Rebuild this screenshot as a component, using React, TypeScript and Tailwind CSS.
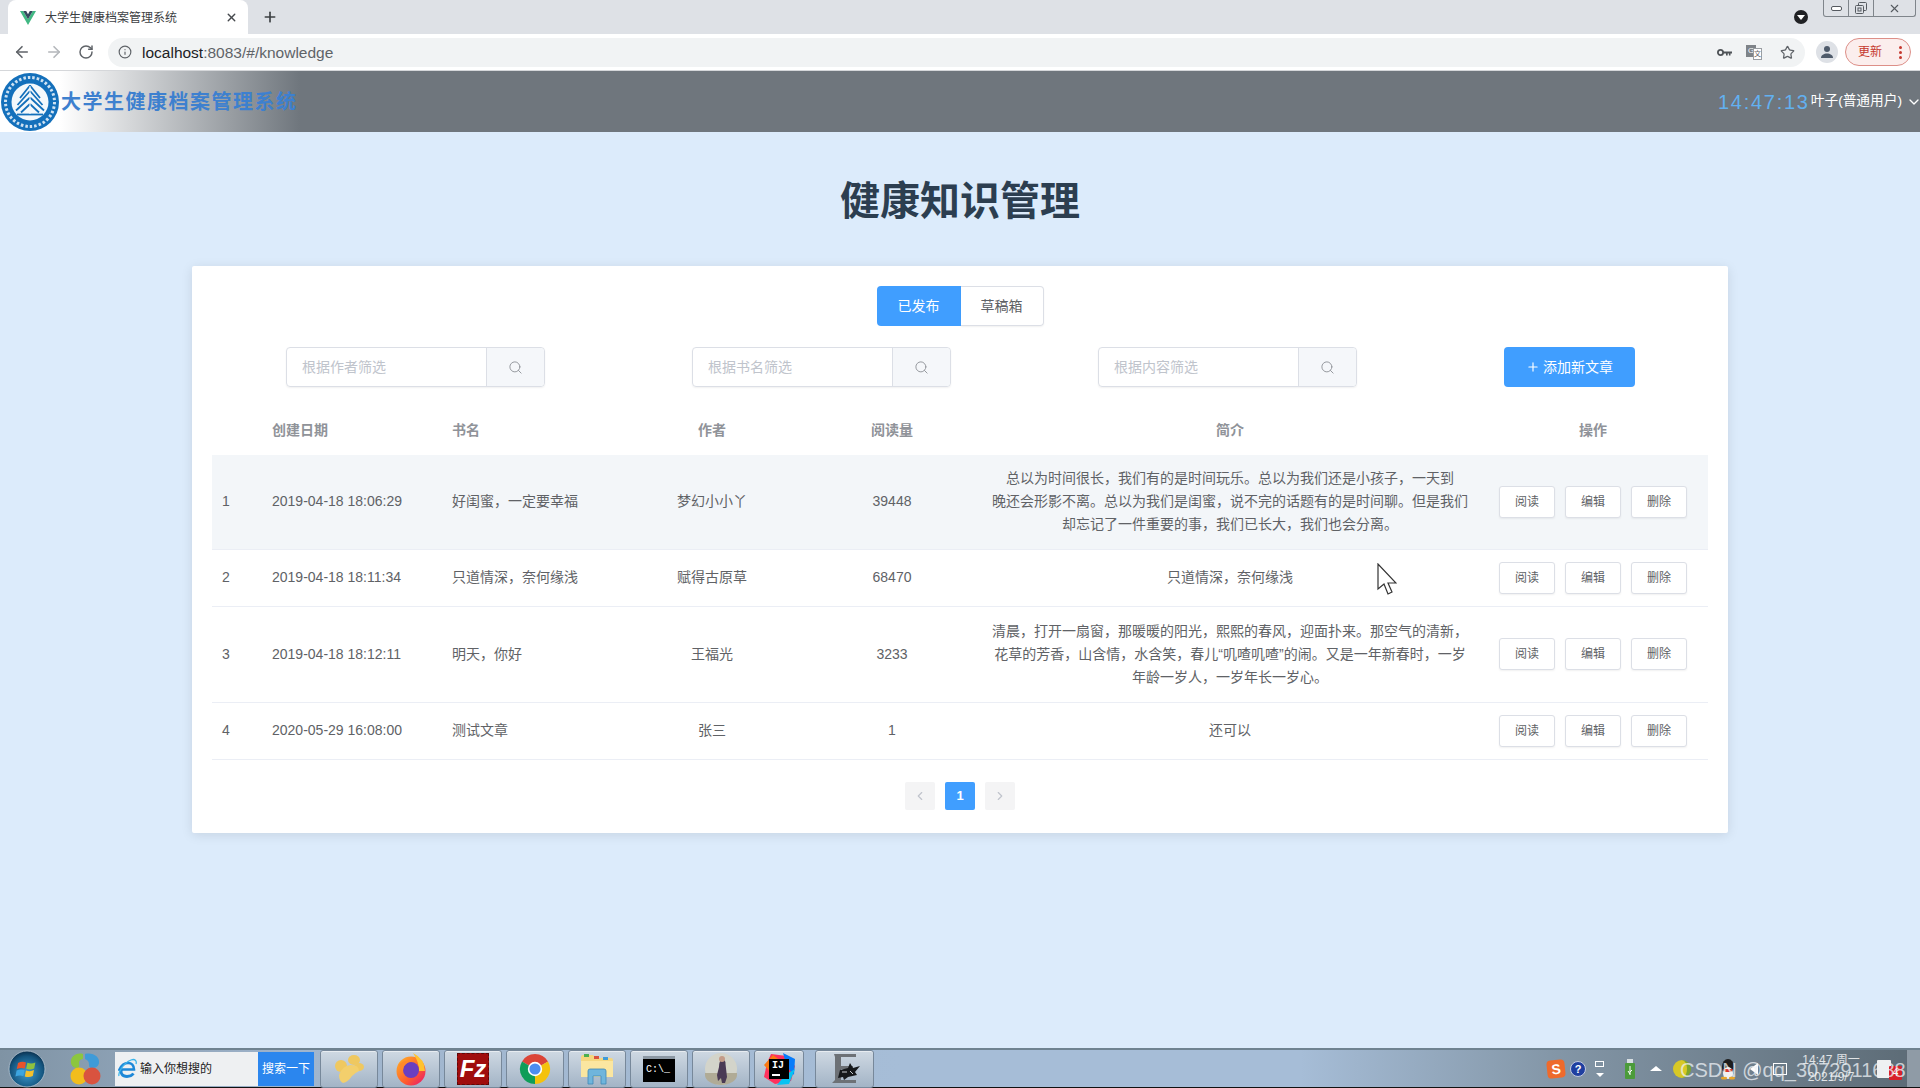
import { ChevronDown, ChevronLeft, ChevronRight, Plus, Search, X, ArrowLeft, ArrowRight, RotateCw, Info, Star } from "lucide-react";

const rows = [
  {
    id: 1,
    date: "2019-04-18 18:06:29",
    book: "好闺蜜，一定要幸福",
    author: "梦幻小小丫",
    reads: "39448",
    height: "h-[94px]",
    intro: [
      "总以为时间很长，我们有的是时间玩乐。总以为我们还是小孩子，一天到",
      "晚还会形影不离。总以为我们是闺蜜，说不完的话题有的是时间聊。但是我们",
      "却忘记了一件重要的事，我们已长大，我们也会分离。",
    ],
  },
  { id: 2, date: "2019-04-18 18:11:34", book: "只道情深，奈何缘浅", author: "赋得古原草", reads: "68470", height: "h-[57px]", intro: ["只道情深，奈何缘浅"] },
  {
    id: 3,
    date: "2019-04-18 18:12:11",
    book: "明天，你好",
    author: "王福光",
    reads: "3233",
    height: "h-[96px]",
    intro: [
      "清晨，打开一扇窗，那暖暖的阳光，熙熙的春风，迎面扑来。那空气的清新，",
      "花草的芳香，山含情，水含笑，春儿“叽喳叽喳”的闹。又是一年新春时，一岁",
      "年龄一岁人，一岁年长一岁心。",
    ],
  },
  { id: 4, date: "2020-05-29 16:08:00", book: "测试文章", author: "张三", reads: "1", height: "h-[57px]", intro: ["还可以"] },
];

function VueIcon() {
  return (
    <svg width="16" height="14" viewBox="0 0 16 14">
      <path d="M0 0h3.2L8 8.3 12.8 0H16L8 14z" fill="#41b883" />
      <path d="M3.2 0h3L8 3.2 9.800 0h3L8 8.3z" fill="#35495e" />
    </svg>
  );
}

function Emblem() {
  return (
    <svg width="58" height="58" viewBox="0 0 58 58">
      <circle cx="29" cy="29" r="29" fill="#1470bb" />
      <circle cx="29" cy="29" r="24.500" fill="none" stroke="#cfe2f2" strokeWidth="3" strokeDasharray="2.500 2" />
      <circle cx="29" cy="29" r="20.500" fill="#1470bb" />
      <circle cx="29" cy="29" r="18.500" fill="#f4f8fb" />
      <path d="M29 12.500 19 25M29 12.500 39 25M29 18 16.500 32M29 18 41.500 32M29 24.500 15 37.500M29 24.500 43 37.500M29 31 20 39.500M29 31 38 39.500" stroke="#1470bb" strokeWidth="1.800" fill="none" />
      <path d="M16 41.500h26" stroke="#1470bb" strokeWidth="1.800" />
      <path d="M29 13v28" stroke="#f4f8fb" strokeWidth="1" />
    </svg>
  );
}

function WinOrb() {
  return (
    <svg width="38" height="38" viewBox="0 0 38 38">
      <defs>
        <radialGradient id="orb" cx="50%" cy="60%" r="60%">
          <stop offset="0%" stopColor="#3f9bd0" />
          <stop offset="75%" stopColor="#14557f" />
          <stop offset="100%" stopColor="#0b2f4d" />
        </radialGradient>
      </defs>
      <circle cx="19" cy="19" r="18" fill="url(#orb)" stroke="#b7c7d3" strokeWidth="0.8" />
      <path d="M10 13q4-2 8-.5l-1.200 6q-4-1.400-8 .5z" fill="#e8532b" />
      <path d="M19.400 12.800q4 1.600 8-.3l-1.200 6q-4 1.800-8 .3z" fill="#8fc23f" />
      <path d="M8.600 20.600q4-2 8-.5l-1.200 6q-4-1.400-8 .5z" fill="#3da5e0" />
      <path d="M18 20.400q4 1.600 8-.3l-1.200 6q-4 1.800-8 .3z" fill="#f5c02c" />
    </svg>
  );
}

function Petals() {
  return (
    <svg width="32" height="34" viewBox="0 0 32 34">
      <path d="M14 2C7 0 1 5 2 11c.5 3 3 5 7 5 2-1 1-3 1-5 0-3 2-4 4-4z" fill="#8cc63f" />
      <path d="M16 2c8-2 15 3 14 9-.5 3-3 5-7 5-3 0-3-2-3-4 0-3-2-4-4-5z" fill="#3f9bd8" />
      <circle cx="10" cy="24" r="8.500" fill="#f2bd1d" />
      <circle cx="23" cy="24" r="8.500" fill="#d9533f" />
    </svg>
  );
}

function IeIcon() {
  return (
    <svg width="20" height="21" viewBox="0 0 20 21">
      <path d="M1.500 11.500h14.500c0-4-2.600-6.500-6-6.500-3.700 0-6.700 2.700-8.500 6.500z" fill="none" stroke="#1e88d8" strokeWidth="2.600" />
      <path d="M3.500 11c-1.400 4.500.8 7.500 5.500 7.500 2.700 0 5-1 6.500-3" fill="none" stroke="#1e88d8" strokeWidth="2.800" />
      <path d="M1 18C0 15 5 5 13 2c4-1.400 6 .5 5 4" fill="none" stroke="#3bb4ea" strokeWidth="1.300" />
    </svg>
  );
}

function FolderYellow() {
  return (
    <svg width="32" height="32" viewBox="0 0 32 32">
      <ellipse cx="21" cy="7" rx="6" ry="5" fill="#efc860" />
      <ellipse cx="8" cy="13" rx="6" ry="6" fill="#efc860" />
      <ellipse cx="26" cy="14" rx="5" ry="4" fill="#efc860" />
      <path d="M6 22q4-10 12-10t8 6q-4 2-7 5-4 6-9 7-4-2-4-8z" fill="#f3cf6c" />
    </svg>
  );
}

function Firefox() {
  return (
    <svg width="32" height="34" viewBox="0 0 32 34">
      <defs>
        <linearGradient id="ff" x1="0" y1="0" x2="1" y2="1">
          <stop offset="0%" stopColor="#ffb628" />
          <stop offset="60%" stopColor="#ff5a2d" />
          <stop offset="100%" stopColor="#e3127a" />
        </linearGradient>
      </defs>
      <circle cx="16" cy="19" r="14.500" fill="url(#ff)" />
      <path d="M18 1q12 6 12 18h-6q0-9-6-18z" fill="#ffc22e" />
      <circle cx="16" cy="18" r="8" fill="#6a3fc0" />
      <path d="M4 13q5-6 10-3-6 3-6 9-3-2-4-6z" fill="#ff8a2b" />
    </svg>
  );
}

function Chrome() {
  return (
    <svg width="32" height="32" viewBox="0 0 32 32">
      <path d="M16 16 3 8.500A15 15 0 0 1 29 8.500z" fill="#db4437" />
      <path d="M16 16 29 8.500A15 15 0 0 1 16 31z" fill="#f4c20d" />
      <path d="M16 16 16 31A15 15 0 0 1 3 8.500z" fill="#0f9d58" />
      <circle cx="16" cy="16" r="7.200" fill="#fff" />
      <circle cx="16" cy="16" r="5.600" fill="#4d8df1" />
    </svg>
  );
}

function Explorer() {
  return (
    <svg width="34" height="32" viewBox="0 0 34 32">
      <path d="M1 4q0-2 2-2h10l3 3h15q2 0 2 2v15H1z" fill="#f5d77f" />
      <rect x="4" y="1" width="5" height="3" fill="#4caf50" />
      <rect x="14" y="3" width="5" height="3" fill="#d9533f" />
      <rect x="23" y="4" width="5" height="3" fill="#3f9bd8" />
      <rect x="1" y="8" width="32" height="16" fill="#fbe6a0" />
      <path d="M8 18q0-2 2-2h14q2 0 2 2v13h-5v-8h-8v8H8z" fill="#6fb5dc" stroke="#3f88b6" strokeWidth="0.8" />
    </svg>
  );
}

function Avatar() {
  return (
    <svg width="32" height="32" viewBox="0 0 32 32">
      <circle cx="16" cy="16" r="16" fill="#d3d4ca" />
      <path d="M0 20h32v2a16 10 0 0 1-32 0z" fill="#b0ab96" />
      <path d="M17 6q4 1 3.500 5L22 24l-2 6h-3l-1-5-3 3-1-6 2-8q0-6 3-8z" fill="#4a3a55" />
      <circle cx="17" cy="6" r="3" fill="#c49c88" />
    </svg>
  );
}

function Idea() {
  return (
    <div className="relative w-[32px] h-[32px]">
      <svg width="32" height="32" viewBox="0 0 32 32" className="absolute inset-0">
        <path d="M8 1 24 3 32 13 28 28 12 31 1 24 4 10z" fill="#fe315d" />
        <path d="M20 0 32 6 31 22 24 14z" fill="#087cfa" />
        <path d="M1 12 10 2 18 8 8 20z" fill="#f97a12" />
        <path d="M22 22 32 16 26 31 14 32z" fill="#07c3f2" />
        <rect x="6" y="6" width="20" height="20" fill="#000" />
        <rect x="9" y="21" width="8" height="2" fill="#fff" />
      </svg>
      <span className="absolute left-[9px] top-[6px] text-[10px] leading-[13px] font-bold text-white font-['Liberation_Mono',monospace]">IJ</span>
    </div>
  );
}

function LastApp() {
  return (
    <svg width="34" height="34" viewBox="0 0 34 34">
      <path d="M6 2h22v3H13v9h12v3H13v11h15v3H4l3-3V5z" fill="#6d7176" />
      <path d="M12 18l8-2 2-5 3 5 7-2-5 6 2 3-9 2-4 3-1-3-5 1z" fill="#16191c" />
      <path d="M14 20h5M22 19l3 3" stroke="#c8ccd0" strokeWidth="1" />
    </svg>
  );
}

function TaskButton({ children, w = "w-[58px]" }: { children: React.ReactNode; w?: string }) {
  return (
    <div className={`${w} h-[38px] flex items-center justify-center rounded-[3px] border border-[#77889a] bg-gradient-to-b from-[#cfd9e3] to-[#a3b4c6] shadow-[inset_0_1px_0_rgba(255,255,255,0.5)]`}>
      {children}
    </div>
  );
}

function TabBar() {
  return (
    <div className="h-[34px] bg-[#dee1e6] flex pl-2 relative">
      <div className="w-[240px] h-[34px] bg-white rounded-t-[8px] flex items-center pl-[12px] pr-[10px] pt-[1px]">
        <VueIcon />
        <span className="ml-[9px] text-[12px] text-[#3c4043]">大学生健康档案管理系统</span>
        <X size={13} strokeWidth={2.5} className="ml-auto text-[#45484c]" />
      </div>
      <Plus size={16} strokeWidth={2.5} className="ml-[14px] mt-[9px] text-[#3c4043]" />
      <div className="ml-auto mt-[10px] mr-[15px] w-[14px] h-[14px] rounded-full bg-[#202124] flex items-center justify-center">
        <div className="w-0 h-0 border-l-[4px] border-r-[4px] border-t-[5px] border-l-transparent border-r-transparent border-t-white" />
      </div>
      <div className="w-[93px] h-[17px] mr-[4px] border border-t-0 border-[#7f858b] rounded-b-[3px] flex text-[#555a60]">
        <div className="w-[25px] border-r border-[#7f858b] flex items-center justify-center">
          <div className="w-[11px] h-[5px] border border-[#555a60] rounded-[2px] bg-white" />
        </div>
        <div className="w-[25px] border-r border-[#7f858b] flex items-center justify-center">
          <svg width="12" height="12" viewBox="0 0 12 12" fill="none" stroke="#555a60">
            <rect x="3.500" y="0.500" width="8" height="8" rx="1" />
            <rect x="0.500" y="3.500" width="8" height="8" rx="1" fill="#dee1e6" />
            <rect x="3" y="6" width="3" height="3" />
          </svg>
        </div>
        <div className="flex-1 flex items-center justify-center">
          <X size={13} strokeWidth={2} />
        </div>
      </div>
    </div>
  );
}

function AddressBar() {
  return (
    <div className="h-[37px] bg-white flex items-center border-b border-[#d5d7da]">
      <ArrowLeft size={18} strokeWidth={2.2} className="ml-[13px] text-[#5f6368]" />
      <ArrowRight size={18} strokeWidth={2.2} className="ml-[14px] text-[#b4b7bb]" />
      <RotateCw size={16} strokeWidth={2.2} className="ml-[15px] text-[#5f6368]" />
      <div className="ml-[14px] w-[1697px] h-[29px] bg-[#f1f3f4] rounded-full flex items-center pl-[10px] pr-[10px]">
        <Info size={14} strokeWidth={2} className="text-[#5f6368]" />
        <span className="ml-[10px] mt-[1px] text-[15.5px] text-[#5f6368]">
          <span className="text-[#202124]">localhost</span>:8083/#/knowledge
        </span>
        <svg width="15" height="9" viewBox="0 0 15 9" className="ml-auto">
          <circle cx="3.500" cy="4.500" r="2.600" fill="none" stroke="#4f5357" strokeWidth="1.800" />
          <path d="M6 3.600h9v1.800h-1.500v2h-1.600v-2h-1.200v2H9V5.400H6z" fill="#4f5357" />
        </svg>
        <div className="ml-[14px] relative w-[16px] h-[15px]">
          <div className="absolute left-0 top-0 w-[10px] h-[12px] bg-[#7e8388] text-[8px] leading-[12px] text-center text-white">G</div>
          <div className="absolute right-0 bottom-0 w-[9px] h-[12px] bg-white border border-[#9a9ea3] text-[7px] leading-[10px] text-center text-[#5f6368]">文</div>
        </div>
        <Star size={15} strokeWidth={2} className="ml-[18px] text-[#5f6368]" />
      </div>
      <div className="ml-[11px] w-[22px] h-[22px] rounded-full bg-[#dee1e6] flex items-center justify-center">
        <svg width="14" height="14" viewBox="0 0 14 14" fill="#4f5b6b">
          <circle cx="7" cy="4" r="3" />
          <path d="M1 13c0-3 3-4.500 6-4.500s6 1.500 6 4.500z" />
        </svg>
      </div>
      <div className="ml-[7px] w-[66px] h-[28px] rounded-full border border-[#dd8f88] bg-[#fbeeed] flex items-center pl-[12px] text-[12px] text-[#c5392f]">
        更新
        <div className="ml-auto mr-[8px] flex flex-col gap-[2px]">
          <div className="w-[3px] h-[3px] rounded-full bg-[#c5392f]" />
          <div className="w-[3px] h-[3px] rounded-full bg-[#c5392f]" />
          <div className="w-[3px] h-[3px] rounded-full bg-[#c5392f]" />
        </div>
      </div>
    </div>
  );
}

function SearchBox({ placeholder }: { placeholder: string }) {
  return (
    <div className="flex w-[259px] h-[40px] border border-[#dcdfe6] rounded-[4px] shadow-[0_1px_2px_rgba(0,0,0,0.06)]">
      <div className="flex-1 pl-[15px] text-[14px] leading-[38px] text-[#c0c4cc]">{placeholder}</div>
      <div className="w-[58px] bg-[#f5f7fa] border-l border-[#dcdfe6] rounded-r-[4px] flex items-center justify-center text-[#909399]">
        <Search size={15} strokeWidth={1.5} />
      </div>
    </div>
  );
}

function SmallButton({ label }: { label: string }) {
  return (
    <div className="w-[56px] h-[32px] border border-[#dcdfe6] rounded-[3px] bg-white text-[12px] leading-[30px] text-center text-[#606266] shadow-[0_1px_2px_rgba(0,0,0,0.06)]">
      {label}
    </div>
  );
}

function Knowledge() {
  return (
    <div className="flex-1 bg-[#dcebfb] relative">
      <h1 className="mt-[41px] mb-[37px] text-center text-[40px] leading-[56px] font-bold text-[#2c3e50]">健康知识管理</h1>
      <div className="w-[1536px] mx-auto bg-white rounded-[2px] shadow-[0_2px_12px_rgba(0,0,0,0.1)] px-5 pt-5 pb-[23px]">
        <div className="flex justify-center">
          <div className="w-[84px] h-[40px] bg-[#409eff] rounded-l-[4px] text-white text-[14px] leading-[40px] text-center">已发布</div>
          <div className="w-[83px] h-[40px] border border-l-0 border-[#dcdfe6] rounded-r-[4px] text-[#606266] text-[14px] leading-[38px] text-center shadow-[0_1px_2px_rgba(0,0,0,0.06)]">草稿箱</div>
        </div>
        <div className="mt-[21px] flex justify-center gap-[147px] pl-[1px]">
          <SearchBox placeholder="根据作者筛选" />
          <SearchBox placeholder="根据书名筛选" />
          <SearchBox placeholder="根据内容筛选" />
          <div className="w-[131px] h-[40px] bg-[#409eff] rounded-[4px] text-white text-[14px] flex items-center justify-center gap-[3px]">
            <Plus size={14} />
            添加新文章
          </div>
        </div>
        <table className="mt-[18px] w-full table-fixed border-collapse text-[14px] text-[#606266]">
          <colgroup>
            <col className="w-[50px]" />
            <col className="w-[180px]" />
            <col className="w-[180px]" />
            <col className="w-[180px]" />
            <col className="w-[180px]" />
            <col className="w-[496px]" />
            <col className="w-[230px]" />
          </colgroup>
          <thead>
            <tr className="h-[50px] text-[#909399] font-bold">
              <th />
              <th className="px-[10px] text-left">创建日期</th>
              <th className="px-[10px] text-left">书名</th>
              <th className="px-[10px] text-center">作者</th>
              <th className="px-[10px] text-center">阅读量</th>
              <th className="px-[10px] text-center">简介</th>
              <th className="px-[10px] text-center">操作</th>
            </tr>
          </thead>
          <tbody>
            {rows.map((row) => (
              <tr key={row.id} className={`border-b border-[#ebeef5] ${row.id === 1 ? "bg-[#f3f6f9]" : ""} ${row.height}`}>
                <td className="pl-[10px]">{row.id}</td>
                <td className="px-[10px]">{row.date}</td>
                <td className="px-[10px]">{row.book}</td>
                <td className="px-[10px] text-center">{row.author}</td>
                <td className="px-[10px] text-center">{row.reads}</td>
                <td className="text-center leading-[23px] whitespace-nowrap">
                  {row.intro.map((line) => (
                    <div key={line}>{line}</div>
                  ))}
                </td>
                <td>
                  <div className="flex justify-center gap-[10px]">
                    <SmallButton label="阅读" />
                    <SmallButton label="编辑" />
                    <SmallButton label="删除" />
                  </div>
                </td>
              </tr>
            ))}
          </tbody>
        </table>
        <div className="mt-[22px] flex justify-center gap-[10px]">
          <div className="w-[30px] h-[28px] bg-[#f4f4f5] rounded-[2px] flex items-center justify-center text-[#c0c4cc]">
            <ChevronLeft size={14} />
          </div>
          <div className="w-[30px] h-[28px] bg-[#409eff] rounded-[2px] text-white text-[13px] font-bold leading-[28px] text-center">1</div>
          <div className="w-[30px] h-[28px] bg-[#f4f4f5] rounded-[2px] flex items-center justify-center text-[#c0c4cc]">
            <ChevronRight size={14} />
          </div>
        </div>
      </div>
      {/* mouse pointer in the capture */}
      <svg width="20" height="32" viewBox="0 0 20 32" className="absolute left-[1377px] top-[431px]">
        <path d="M1 1v25l6-5 4 10 4-2-4-9h8z" fill="#fff" stroke="#333" strokeWidth="1.200" />
      </svg>
    </div>
  );
}

function Taskbar() {
  return (
    <div className="h-[40px] shrink-0 relative border-t-2 border-b border-t-[#6f8290] border-b-[#111] bg-[linear-gradient(to_right,#7f93a4,#a0b5cd_300px,#a6bdd7_900px,#a6bdd7_1300px,#8497a8_1550px,#5e6d78_1900px)] flex items-center">
      <div className="ml-[8px]">
        <WinOrb />
      </div>
      <div className="ml-[23px]">
        <Petals />
      </div>
      <div className="ml-[14px] w-[143px] h-[34px] bg-[#eef0f2] flex items-center pl-[3px]">
        <IeIcon />
        <span className="ml-[2px] text-[12px] text-[#222]">输入你想搜的</span>
      </div>
      <div className="w-[56px] h-[34px] bg-[#2b86ee] text-white text-[12px] leading-[34px] text-center">搜索一下</div>
      <div className="ml-[6px] flex gap-[4px]">
        <TaskButton><FolderYellow /></TaskButton>
        <TaskButton><Firefox /></TaskButton>
        <TaskButton>
          <div className="w-[32px] h-[32px] bg-[#a00d0d] border border-dashed border-[#5e0808] text-white text-[24px] leading-[30px] text-center font-bold italic font-['Liberation_Sans',sans-serif]">Fz</div>
        </TaskButton>
        <TaskButton><Chrome /></TaskButton>
        <TaskButton><Explorer /></TaskButton>
        <TaskButton>
          <div className="w-[32px] h-[26px] bg-black border-t-[3px] border-[#8c98a4] text-white text-[10px] leading-[22px] pl-[3px] font-['Liberation_Mono',monospace]">C:\_</div>
        </TaskButton>
        <TaskButton><Avatar /></TaskButton>
        <TaskButton w="w-[50px]"><Idea /></TaskButton>
        <div className="w-[3px]" />
        <TaskButton w="w-[59px]"><LastApp /></TaskButton>
      </div>
      <div className="ml-auto h-full flex items-center text-white">
        <div className="w-[18px] h-[18px] rounded-[4px] bg-[#ee6a2c] text-[14px] leading-[18px] text-center font-bold -rotate-6">S</div>
        <div className="ml-[5px] w-[16px] h-[16px] rounded-full bg-[#1f3fa0] border border-[#c4cbe0] text-[11px] leading-[14px] text-center font-bold">?</div>
        <div className="ml-[9px] flex flex-col items-center gap-[6px]">
          <div className="w-[9px] h-[6px] border border-white" />
          <div className="w-0 h-0 border-l-[4px] border-r-[4px] border-t-[4px] border-l-transparent border-r-transparent border-t-white" />
        </div>
        <svg width="10" height="20" viewBox="0 0 10 20" className="ml-[21px]">
          <rect x="2" y="0" width="6" height="5" fill="#d8dfe2" />
          <rect x="0" y="4" width="10" height="16" rx="1" fill="#4b9b3a" />
          <path d="M5 7v9M5 15l-2-3M5 13l2-2" stroke="#fff" strokeWidth="1" fill="none" />
        </svg>
        <div className="ml-[15px] w-0 h-0 border-l-[6px] border-r-[6px] border-b-[5px] border-l-transparent border-r-transparent border-b-white" />
        <div className="ml-[11px] w-[18px] h-[18px] rounded-full bg-[#d8c825] border-r-4 border-[#7fa52c]" />
        <svg width="16" height="22" viewBox="0 0 16 22" className="ml-[29px]">
          <ellipse cx="8" cy="9" rx="6" ry="8" fill="#1d1d1d" />
          <ellipse cx="8" cy="15" rx="5" ry="6" fill="#f2f2f2" />
          <path d="M3 11h10l-2 3H5z" fill="#d9382c" />
          <ellipse cx="4" cy="20" rx="3" ry="1.500" fill="#e8a72a" />
          <ellipse cx="12" cy="20" rx="3" ry="1.500" fill="#e8a72a" />
        </svg>
        <div className="ml-[14px] w-0 h-0 border-t-[6px] border-b-[6px] border-r-[8px] border-t-transparent border-b-transparent border-r-white" />
        <div className="ml-[15px] w-[14px] h-[12px] border border-white" />
        <div className="ml-[8px] w-[72px] text-[12px] leading-[17px] text-center text-white/80">
          <div>14:47 周一</div>
          <div>2021/9/7</div>
        </div>
        <div className="ml-[10px] w-[14px] h-[18px] bg-white/90 rounded-[1px]" />
        <div className="ml-[-2px] mt-[8px] w-[13px] h-[14px] bg-[#d8202a] rounded-[1px] text-[10px] leading-[14px] text-center">4</div>
        <div className="ml-[4px] w-[14px] h-full bg-[#8f9ba6] border-l border-[#5f6b76]" />
      </div>
      {/* blog watermark stamped over the tray */}
      <div className="absolute left-[1680px] top-[8px] text-[20px] leading-[24px] text-[#eef2f6]/75 whitespace-nowrap">CSDN @qq_3072911688</div>
    </div>
  );
}

export default function App() {
  return (
    <div className="h-[1088px] overflow-hidden flex flex-col bg-white font-['Liberation_Sans','Noto_Sans_CJK_SC',sans-serif]">
      <TabBar />
      <AddressBar />
      <div className="h-[61px] shrink-0 flex items-center bg-[linear-gradient(to_right,#fff_60px,#6f767d_300px)]">
        <div className="ml-[1px]">
          <Emblem />
        </div>
        <span className="ml-[2px] text-[20px] font-bold tracking-[1.5px] text-[#3d80cf]">大学生健康档案管理系统</span>
        <span className="ml-auto text-[20px] tracking-[1.75px] text-[#62b0f0]">14:47:13</span>
        <span className="ml-[1px] text-[13.7px] text-white">叶子(普通用户)</span>
        <ChevronDown size={16} className="ml-[4px] mr-[-2px] text-white" />
      </div>
      <Knowledge />
      <Taskbar />
    </div>
  );
}
